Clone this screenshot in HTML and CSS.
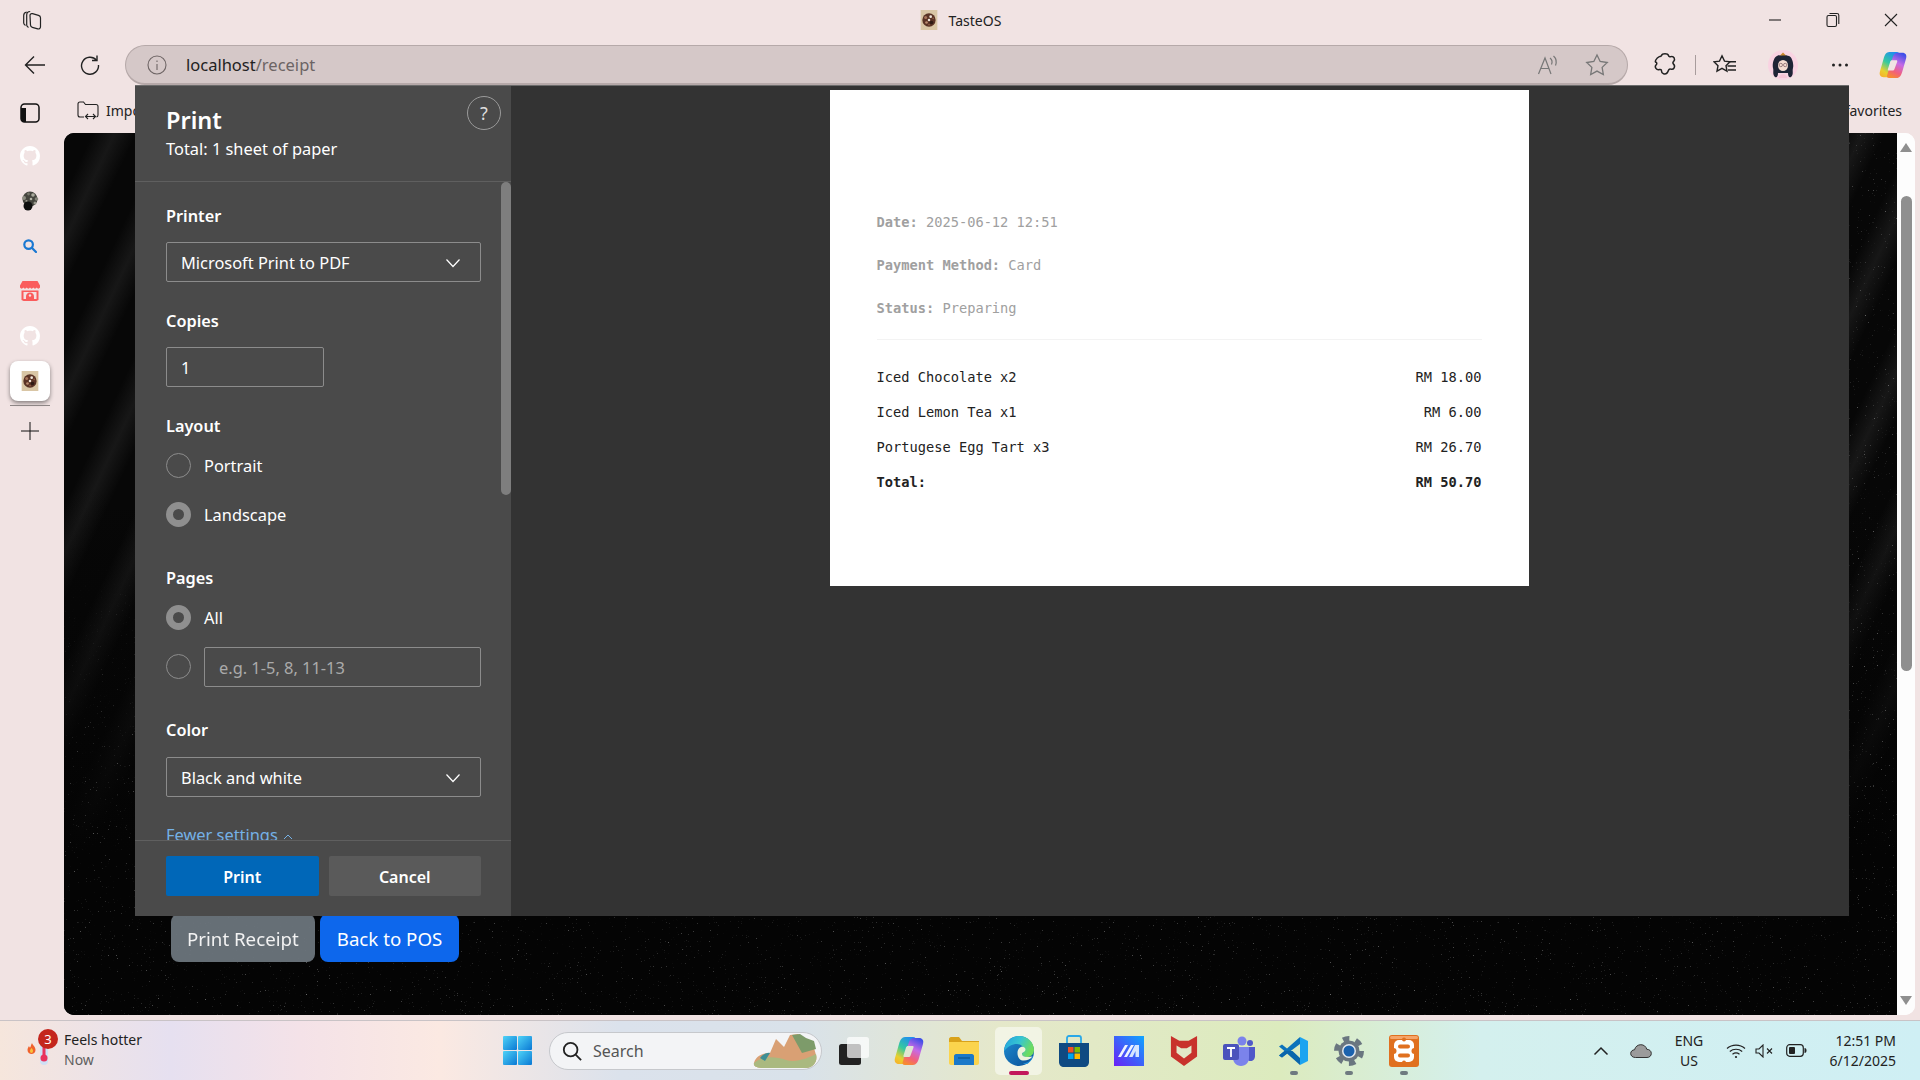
FILE: index.html
```html
<!DOCTYPE html>
<html lang="en">
<head>
    <meta charset="UTF-8">
    <title>TasteOS</title>
    <link rel="stylesheet" href="styles.css">
</head>
<body>

<svg class="defs" width="0" height="0">
    <defs>
        <filter id="star-noise" x="0" y="0" width="100%" height="100%">
            <feTurbulence type="fractalNoise" baseFrequency="0.75" numOctaves="2" seed="7"/>
            <feColorMatrix values="0 0 0 0 1  0 0 0 0 1  0 0 0 0 1  5 0 0 0 -3.600"/>
        </filter>
        <linearGradient id="copilot-a" x1=".7" y1="0" x2=".2" y2="1">
            <stop offset="0" stop-color="#1f8df0"/>
            <stop offset=".45" stop-color="#35c9a0"/>
            <stop offset=".8" stop-color="#e9d02e"/>
            <stop offset="1" stop-color="#f5b52a"/>
        </linearGradient>
        <linearGradient id="copilot-b" x1=".7" y1="0" x2=".3" y2="1">
            <stop offset="0" stop-color="#3f4fe8"/>
            <stop offset=".4" stop-color="#c56ae6"/>
            <stop offset=".75" stop-color="#f2607a"/>
            <stop offset="1" stop-color="#f78a32"/>
        </linearGradient>
        <linearGradient id="edge-a" x1="0" y1="0" x2="1" y2="1">
            <stop offset="0" stop-color="#1e8fd4"/>
            <stop offset="1" stop-color="#0b4d94"/>
        </linearGradient>
        <linearGradient id="edge-b" x1="0" y1="0" x2="1" y2=".4">
            <stop offset="0" stop-color="#1f9fe0"/>
            <stop offset=".55" stop-color="#37c6d0"/>
            <stop offset="1" stop-color="#6fdc5c"/>
        </linearGradient>
        <linearGradient id="win-a" x1="0" y1="0" x2="1" y2="1">
            <stop offset="0" stop-color="#4fd3f7"/>
            <stop offset="1" stop-color="#0a78d4"/>
        </linearGradient>
        <linearGradient id="app-a" x1="1" y1="0" x2="0" y2="1">
            <stop offset="0" stop-color="#0ea5ff"/>
            <stop offset="1" stop-color="#6a1ff5"/>
        </linearGradient>
        <symbol id="github" viewBox="0 0 16 16">
            <path d="M8 0C3.58 0 0 3.58 0 8c0 3.54 2.29 6.53 5.47 7.59.4.07.55-.17.55-.38 0-.19-.01-.82-.01-1.49-2.01.37-2.53-.49-2.69-.94-.09-.23-.48-.94-.82-1.13-.28-.15-.68-.52-.01-.53.63-.01 1.08.58 1.23.82.72 1.21 1.87.87 2.33.66.07-.52.28-.87.51-1.07-1.78-.2-3.64-.89-3.64-3.95 0-.87.31-1.59.82-2.15-.08-.2-.36-1.02.08-2.12 0 0 .67-.21 2.2.82.64-.18 1.32-.27 2-.27.68 0 1.36.09 2 .27 1.53-1.04 2.2-.82 2.2-.82.44 1.1.16 1.92.08 2.12.51.56.82 1.27.82 2.15 0 3.07-1.87 3.75-3.65 3.95.29.25.54.73.54 1.48 0 1.07-.01 1.93-.01 2.2 0 .21.15.46.55.38A8.013 8.013 0 0016 8c0-4.42-3.58-8-8-8z" fill="#fff"/>
        </symbol>
        <symbol id="taste" viewBox="0 0 20 24">
            <rect width="20" height="24" fill="#d9c6a5"/>
            <circle cx="10" cy="12" r="8" fill="#5a3325"/>
            <circle cx="6" cy="9" r="1.800" fill="#a8745a"/>
            <circle cx="13" cy="15" r="2.200" fill="#2f1a14"/>
            <circle cx="12" cy="8" r="1.600" fill="#efe6da"/>
            <circle cx="7" cy="15" r="1.600" fill="#b98a6e"/>
            <circle cx="10" cy="12" r="1.500" fill="#efe6da"/>
            <circle cx="15" cy="10" r="1.100" fill="#8d5c44"/>
            <circle cx="10" cy="17.500" r="1.100" fill="#8d5c44"/>
        </symbol>
        <symbol id="chevron" viewBox="0 0 16 16">
            <path d="M1.500 4.500 8 11.500l6.500-7" fill="none" stroke="#fff" stroke-width="1.200"/>
        </symbol>
        <symbol id="copilot" viewBox="0 0 30 30">
            <path d="M11 1h8c2.500 0 3 1.500 2 4L15 24c-.8 2.500-2.500 4-5 4H5c-3.500 0-5-2.500-4-6L5 8c1-4 3-7 6-7z" fill="url(#copilot-a)"/>
            <path d="M19 29h-8c-2.500 0-3-1.500-2-4l6-19c.8-2.500 2.500-4 5-4h5c3.500 0 5 2.500 4 6l-4 14c-1 4-3 7-6 7z" fill="url(#copilot-b)"/>
            <path d="M14 10h4.500c1 0 1.300.7 1 1.500l-3 8c-.3 1-1 1.500-2 1.500H10.500c-1 0-1.300-.7-1-1.500l2.500-8c.3-.9 1-1.500 2-1.500z" fill="currentColor"/>
        </symbol>
    </defs>
</svg>

<header class="titlebar">
    <div class="title-left">
        <svg width="22" height="22" viewBox="0 0 22 22" fill="none" stroke="#222" stroke-width="1.200">
            <path d="M4.500 16.500c-1-.6-1.800-1.200-1.800-2.400V6.500c0-1.800 1.300-3.200 3-3.400"/>
            <path d="M7.500 18.500c-1-.6-1.800-1.200-1.800-2.400V6c0-2 1.500-3.500 3.500-3.500"/>
            <path d="M9 6.500c0-1.500 1-2.200 2.500-1.800l6 1.600c1.200.3 2 1.300 2 2.500v9c0 1.500-1.300 2.500-2.700 2.100l-5.500-1.500c-1.100-.3-1.800-1.200-1.800-2.300z"/>
        </svg>
    </div>
    <div class="title-center">
        <svg class="favicon" width="20" height="20"><use href="#taste"/></svg>
        <span>TasteOS</span>
    </div>
    <div class="window-controls">
        <div class="win-btn">
            <svg width="14" height="14" viewBox="0 0 14 14"><path d="M1 7h12" stroke="#222" stroke-width="1.100"/></svg>
        </div>
        <div class="win-btn">
            <svg width="14" height="16" viewBox="0 0 14 16" fill="none" stroke="#222" stroke-width="1.100"><rect x="1" y="3.500" width="9.500" height="11" rx="1.500"/><path d="M3.500 1.500h7.500c1 0 1.800.8 1.800 1.800v8.700"/></svg>
        </div>
        <div class="win-btn">
            <svg width="14" height="14" viewBox="0 0 14 14"><path d="M1 1l12 12M13 1 1 13" stroke="#222" stroke-width="1.100"/></svg>
        </div>
    </div>
</header>

<nav class="toolbar">
    <div class="tool back">
        <svg width="22" height="20" viewBox="0 0 22 20" fill="none" stroke="#222" stroke-width="1.400"><path d="M21 10H2M10 1.500 1.500 10l8.500 8.500"/></svg>
    </div>
    <div class="tool reload">
        <svg width="22" height="22" viewBox="0 0 22 22" fill="none" stroke="#222" stroke-width="1.400"><path d="M17.500 6.200A8.500 8.500 0 1 0 19.500 11"/><path d="M18 1.500v5h-5"/></svg>
    </div>
    <div class="omnibox">
        <svg class="info-icon" width="20" height="20" viewBox="0 0 20 20" fill="none" stroke="#6e6565" stroke-width="1.100"><circle cx="10" cy="10" r="9"/><path d="M10 9v6M10 5.500v1.500"/></svg>
        <div class="url">localhost<span class="url-path">/receipt</span></div>
        <svg class="read-icon" width="22" height="20" viewBox="0 0 22 20" fill="none" stroke="#777" stroke-width="1.200"><path d="M1.500 19 8 3l6 16M4 13.500h8"/><path d="M13 3c2 1.500 2.500 4 1.500 6.500M16.500 1c2.800 2.500 3.300 6 2 9.500"/></svg>
        <svg class="star-icon" width="24" height="24" viewBox="0 0 22 22" fill="none" stroke="#777" stroke-width="1.200"><path d="M11 1.800l2.900 6 6.500.9-4.700 4.500 1.100 6.500-5.800-3.100-5.800 3.100 1.100-6.500L1.600 8.700l6.500-.9z"/></svg>
    </div>
    <div class="tool ext">
        <svg width="24" height="26" viewBox="0 0 24 26" fill="none" stroke="#222" stroke-width="1.500"><path d="M8.500 3.500C9.300 1 14.700 1 15.500 3.500c.3 1 1.300 1.500 2.300 1.100 3-.9 5 2.800 2.700 5-.8.7-.8 1.800 0 2.500 2.300 2.200.3 6-2.700 5-1-.3-2 .2-2.300 1.200-.8 2.700-3 4-5 3.500-1.500-.4-2-1.800-2-2.800 0-1.200-1-1.800-2-1.500-3 .9-5.500-2.500-3.300-4.700.8-.7.800-1.800 0-2.500C1 10.500 3.300 5.800 6.300 4.600c1-.3 1.900-.2 2.200-1.100z"/></svg>
    </div>
    <div class="tool-sep"></div>
    <div class="tool favs">
        <svg width="24" height="22" viewBox="0 0 24 22" fill="none" stroke="#222" stroke-width="1.400"><path d="M9 1.800l2.500 5.300 5.500.7-4 3.900 1 5.500-5-2.800-5 2.800 1-5.500-4-3.900 5.500-.7z"/><path d="M15.500 7.800H23M14.500 12H23M15 16H23"/></svg>
    </div>
    <div class="tool avatar">
        <svg width="30" height="30" viewBox="0 0 30 30">
            <circle cx="15" cy="15" r="15" fill="#f9d3e2"/>
            <path d="M7 27c-3-3-1-6-2-9-1-4 1-11 4-12 3-1.500 9-1.500 12 0 3 1 5 8 4 12-1 3 1 6-2 9-2 1-3-1-3-4H10c0 3-1 5-3 4z" fill="#1f2436"/>
            <ellipse cx="15" cy="15.500" rx="5" ry="5.500" fill="#f6dcd2"/>
            <circle cx="12.800" cy="15" r="1.700" fill="none" stroke="#7a5a62" stroke-width=".7"/>
            <circle cx="17.200" cy="15" r="1.700" fill="none" stroke="#7a5a62" stroke-width=".7"/>
            <path d="M12 5.500l3-3 3 3z" fill="#c9862c"/>
            <path d="M11 28c0-5 8-5 8 0z" fill="#f7c3d6"/>
        </svg>
    </div>
    <div class="tool dots">
        <svg width="18" height="4" viewBox="0 0 18 4" fill="#222"><circle cx="2.500" cy="2" r="1.500"/><circle cx="9" cy="2" r="1.500"/><circle cx="15.500" cy="2" r="1.500"/></svg>
    </div>
    <div class="tool copilot">
        <svg width="28" height="28"><use href="#copilot"/></svg>
    </div>
</nav>

<div class="main">
    <aside class="sidebar">
        <div class="side-item first">
            <svg width="20" height="20" viewBox="0 0 20 20"><rect x="1" y="1" width="18" height="18" rx="3.500" fill="none" stroke="#111" stroke-width="1.500"/><path d="M1 5h5v14H4.500A3.500 3.500 0 0 1 1 15.500z" fill="#111"/></svg>
        </div>
        <div class="side-item"><svg width="20" height="20"><use href="#github"/></svg></div>
        <div class="side-item">
            <svg width="20" height="20" viewBox="0 0 20 20">
                <circle cx="10" cy="8" r="7.500" fill="#45453e"/>
                <circle cx="4" cy="7" r="2" fill="#8c8c80"/>
                <circle cx="13" cy="4" r="1.800" fill="#a9a99c"/>
                <circle cx="16.500" cy="8" r="1.800" fill="#85857a"/>
                <circle cx="8.500" cy="3" r="1.400" fill="#77776c"/>
                <circle cx="15" cy="12" r="1.500" fill="#9a9a8e"/>
                <circle cx="11" cy="8" r="1.300" fill="#b5b5a8"/>
                <circle cx="6.500" cy="10" r="1.100" fill="#a0a094"/>
                <circle cx="8" cy="15" r="4.500" fill="#0e0e0e"/>
            </svg>
        </div>
        <div class="side-item">
            <svg width="14" height="14" viewBox="0 0 14 14" fill="none" stroke="#1a78d2" stroke-width="2.200"><circle cx="5.600" cy="5.600" r="4.300"/><path d="M8.800 8.800 13 13" stroke-linecap="round"/></svg>
        </div>
        <div class="side-item">
            <svg width="20" height="20" viewBox="0 0 20 20">
                <path d="M2.500 0h15L20 4.500v2c-1 1.500-2.500 1.500-3.300 0-.8 1.500-2.600 1.500-3.400 0-.8 1.500-2.500 1.500-3.300 0-.8 1.500-2.500 1.500-3.300 0-.8 1.500-2.600 1.500-3.400 0C2.500 8 1 8 0 6.500v-2z" fill="#fa5c5c"/>
                <path d="M1.500 9.500h17V19l-2 1h-13l-2-1z" fill="#fa5c5c"/>
                <path d="M3.500 11h13v7h-13z" fill="#f4e2e2"/>
                <path d="M10 11.500c2.500 0 4 2 4 4v2.500H6v-2.500c0-2 1.500-4 4-4z" fill="#fa5c5c"/>
                <circle cx="10" cy="14.500" r="1.200" fill="#f4e2e2"/>
            </svg>
        </div>
        <div class="side-item"><svg width="20" height="20"><use href="#github"/></svg></div>
        <div class="side-item">
            <div class="side-tile"><svg width="20" height="20"><use href="#taste"/></svg></div>
        </div>
        <div class="side-sep"></div>
        <div class="side-item">
            <svg width="18" height="18" viewBox="0 0 18 18"><path d="M0 9h18M9 0v18" stroke="#111" stroke-width="1"/></svg>
        </div>
    </aside>

    <div class="content">
        <div class="favbar">
            <div class="fav-import">
                <svg width="22" height="19" viewBox="0 0 22 19" fill="none" stroke="#222" stroke-width="1.100"><path d="M7 16H3c-1.200 0-2-.8-2-2V3c0-1.200.8-2 2-2h3.500l2 2.500H19c1.200 0 2 .8 2 2v8.500c0 1-.6 1.800-1.500 2"/><path d="M9 15.500h9M11 13l-2.500 2.500L11 18M16 13l2.500 2.500L16 18"/></svg>
                <span>Import favorites</span>
            </div>
            <div class="fav-other">Other favorites</div>
        </div>
        <div class="page">
            <div class="page-bg">
                <svg class="stars" width="100%" height="100%"><rect width="100%" height="100%" filter="url(#star-noise)"/></svg>
                <div class="page-actions">
                    <button class="btn btn-secondary">Print Receipt</button>
                    <button class="btn btn-primary">Back to POS</button>
                </div>
            </div>
            <div class="page-scroll">
                <div class="arrow-up"></div>
                <div class="thumb-wrap"><div class="thumb"></div></div>
                <div class="arrow-down"></div>
            </div>
        </div>
    </div>
</div>

<footer class="taskbar">
    <div class="weather">
        <div class="weather-icon">
            <svg width="36" height="42" viewBox="0 0 36 42">
                <path d="M10 9c.5 2 3.500 3.500 3.500 7 0 2.500-2 4-4 4s-4-1.500-4-4c0-2 1-3 1.500-4 .3 1 .7 1.500 1.200 1.500C9 12 9 10.500 10 9z" fill="#f0622c"/>
                <path d="M9.500 14c1 1 1.500 1.800 1.500 3s-.7 2-1.500 2-1.500-.8-1.500-2 .7-2 1.500-3z" fill="#f9c23c"/>
                <rect x="18" y="4" width="8" height="27" rx="4" fill="#cfe0f5"/>
                <rect x="20.500" y="4" width="3" height="18" fill="#e8335e"/>
                <circle cx="22" cy="24" r="3.500" fill="#e8335e"/>
            </svg>
            <div class="weather-badge">3</div>
        </div>
        <div class="weather-text">
            <div>Feels hotter</div>
            <div class="muted">Now</div>
        </div>
    </div>

    <div class="start">
        <svg width="29" height="29" viewBox="0 0 29 29" fill="url(#win-a)"><rect width="14" height="14" rx="1"/><rect x="15" width="14" height="14" rx="1"/><rect y="15" width="14" height="14" rx="1"/><rect x="15" y="15" width="14" height="14" rx="1"/></svg>
    </div>

    <div class="search">
        <svg width="20" height="20" viewBox="0 0 22 22" fill="none" stroke="#222" stroke-width="2"><circle cx="9.500" cy="9.500" r="7.500"/><path d="M15 15l6 6"/></svg>
        <span>Search</span>
        <svg class="search-art" width="66" height="36" viewBox="0 0 66 36">
            <path d="M2 30C4 22 12 20 18 20l6-14 8 8 6-12 8-1 6 4 8 3 4 14c2 6-3 13-10 13H14C6 35 1 34 2 30z" fill="#d9a074"/>
            <path d="M40 2l8-1 6 4 8 3 2 8-14 4z" fill="#7d9b6a"/>
            <path d="M2 30c10-8 22-6 32-3s22-2 30-6c2 8-3 14-10 14H14C6 35 1 34 2 30z" fill="#aab97f"/>
            <path d="M8 25c3-4 8-6 10-5l-5 8z" fill="#3d8f95"/>
        </svg>
    </div>

    <div class="apps">
        <div class="app">
            <svg width="30" height="30" viewBox="0 0 30 30"><rect y="8" width="22" height="21" rx="2.500" fill="#222"/><rect x="8" y="1" width="22" height="21" rx="2.500" fill="#fff" opacity=".72"/></svg>
        </div>
        <div class="app app-copilot">
            <svg width="30" height="30"><use href="#copilot"/></svg>
        </div>
        <div class="app">
            <svg width="30" height="28" viewBox="0 0 30 28"><path d="M0 2c0-1 1-2 2-2h8l3 4h17v4H0z" fill="#d9a21a"/><path d="M0 5h30v21c0 1-1 2-2 2H2c-1 0-2-1-2-2z" fill="#fbd44d"/><path d="M5 19c0-1 1-2 2-2h16c1 0 2 1 2 2v9H5z" fill="#1b79c9"/><path d="M9 21h12" stroke="#0d558f" stroke-width="1.200"/></svg>
        </div>
        <div class="app app-active">
            <svg width="30" height="30" viewBox="0 0 30 30">
                <circle cx="15" cy="15" r="15" fill="url(#edge-a)"/>
                <path d="M15 0c9 0 15 6.500 15 14 0 4.500-3.500 7-7 7-2.500 0-5-1-5-2.500 0-1.500 2-1.500 2-4.500 0-3-3-6-7-6-5 0-9 2.500-13 7C1 6 8 0 15 0z" fill="url(#edge-b)"/>
                <path d="M13.500 17c0-4 3-7 6-6 2 .6 2.500 2.500 1.500 4-1 1.500-3 1.200-3 3 0 2.500 4 3.500 10.500 2.500-2 3-6.500 4.500-10 4-3-.5-5-3.500-5-7.500z" fill="#eef2dc"/>
                <path d="M30 17c-.5 5-3 8-6 10.500-2 1-4 .5-5-.5 4 .5 8-1.500 11-10z" fill="#1f8fd8"/>
            </svg>
            <div class="app-line"></div>
        </div>
        <div class="app">
            <svg width="30" height="32" viewBox="0 0 30 32"><path d="M8 9V3c0-1 .8-2 2-2h10c1.200 0 2 1 2 2v6" fill="none" stroke="#2aa8e8" stroke-width="1.800"/><path d="M0 8h30v19c0 3-2 5-5 5H5c-3 0-5-2-5-5z" fill="#0f4a82"/><rect x="9" y="12" width="5.500" height="5.500" fill="#f25022"/><rect x="15.500" y="12" width="5.500" height="5.500" fill="#7fba00"/><rect x="9" y="18.500" width="5.500" height="5.500" fill="#00a4ef"/><rect x="15.500" y="18.500" width="5.500" height="5.500" fill="#ffb900"/></svg>
        </div>
        <div class="app">
            <svg width="30" height="30" viewBox="0 0 30 30"><rect width="30" height="30" fill="url(#app-a)"/><path d="M4 21 11 9h3L7 21zM10 21 17 9h3l-7 12z" fill="#eef2ff"/><path d="M15 21 21 9h4v12h-3.500v-6l-3 6z" fill="#d5e6ff"/></svg>
        </div>
        <div class="app">
            <svg width="28" height="32" viewBox="0 0 30 32"><path d="M1 0 10 5h10l9-5v22L15 32 1 22z" fill="#c8322c"/><path d="M7 10l5 3h6l5-3v8l-8 6-8-6z" fill="#e2e8c8"/></svg>
        </div>
        <div class="app">
            <svg width="32" height="30" viewBox="0 0 32 30"><circle cx="19" cy="5" r="4.500" fill="#7b83eb"/><circle cx="27" cy="7" r="3" fill="#5059c9"/><path d="M23 11h9v9c0 3-2 5-4.500 5S23 23 23 20z" fill="#5059c9"/><path d="M10 11h16v11c0 4-3 8-8 8s-8-4-8-8z" fill="#7b83eb"/><rect y="8" width="16" height="16" rx="2" fill="#4b53bc"/><path d="M4 12h8M8 12v9" stroke="#fff" stroke-width="1.800"/></svg>
        </div>
        <div class="app">
            <svg width="30" height="30" viewBox="0 0 30 30"><path d="M21 1 8 12.500 3 8.500 0 10.500 5.500 15 0 19.500 3 21.500 21 8z" fill="#0c72bb"/><path d="M21 29 8 17.500 3 21.500 0 19.500 5.500 15 13.500 15 21 22z" fill="#0a66ac"/><path d="M21 1l8 4v20l-8 4z" fill="#1ca4f0"/></svg>
            <div class="app-dot"></div>
        </div>
        <div class="app">
            <svg width="30" height="30" viewBox="0 0 30 30"><circle cx="15" cy="15" r="10.500" fill="#6a7680"/><circle cx="15" cy="15" r="12.500" fill="none" stroke="#6a7680" stroke-width="5" stroke-dasharray="6.500 6.600"/><circle cx="15" cy="15" r="7" fill="#e3e8ee"/><circle cx="15" cy="15" r="5.500" fill="#1b62ae"/></svg>
            <div class="app-dot"></div>
        </div>
        <div class="app">
            <svg width="30" height="32" viewBox="0 0 30 32"><rect width="30" height="32" rx="3" fill="#e0701f"/><rect x="1" y="1" width="28" height="3" rx="1.500" fill="#f5a56a"/><rect x="5" y="5" width="20" height="22" rx="5" fill="#fff"/><rect x="9" y="9.500" width="12" height="4" rx="2" fill="#e0701f"/><rect x="9" y="18.500" width="12" height="4" rx="2" fill="#e0701f"/><circle cx="4.500" cy="16" r="3" fill="#e0701f"/><circle cx="25.500" cy="16" r="3" fill="#e0701f"/><circle cx="15" cy="4.500" r="2" fill="#e0701f"/><circle cx="15" cy="27.500" r="2" fill="#e0701f"/></svg>
            <div class="app-dot"></div>
        </div>
    </div>

    <div class="tray">
        <div class="tray-item chev">
            <svg width="16" height="10" viewBox="0 0 16 10" fill="none" stroke="#222" stroke-width="1.500"><path d="M1.500 8.500 8 2l6.500 6.500"/></svg>
        </div>
        <div class="tray-item cloud">
            <svg width="22" height="14" viewBox="0 0 22 14"><path d="M5.500 13.500C2.500 13.500 .7 11.700.7 9.500S2.500 5.800 4.500 5.800C5.300 2.500 8 .7 10.800.7c3 0 5.200 1.800 6 4.600 2.500 0 4.500 1.700 4.500 4.100s-1.800 4.100-4.300 4.100z" fill="#9b9b9b" stroke="#333" stroke-width="1"/></svg>
        </div>
        <div class="tray-item lang"><div>ENG</div><div>US</div></div>
        <div class="tray-item wifi">
            <svg width="20" height="16" viewBox="0 0 20 16" fill="none" stroke="#222" stroke-width="1.200"><path d="M1 5.500C6 1 14 1 19 5.500M3.800 8.500C7.300 5.500 12.700 5.500 16.200 8.500M6.500 11.300c2-1.500 5-1.500 7 0"/><circle cx="10" cy="14" r="1.100" fill="#222" stroke="none"/></svg>
        </div>
        <div class="tray-item speaker">
            <svg width="20" height="14" viewBox="0 0 20 14" fill="none" stroke="#222" stroke-width="1.100"><path d="M1 5v4h3l4 4V1L4 5z"/><path d="M12 4.500l5 5M17 4.500l-5 5"/></svg>
        </div>
        <div class="tray-item battery">
            <svg width="21" height="13" viewBox="0 0 21 13"><rect x=".7" y=".7" width="16.600" height="11.600" rx="3" fill="none" stroke="#222" stroke-width="1.200"/><rect x="3" y="3" width="6" height="7" rx="1" fill="#222"/><path d="M18.500 4c1.500 0 2 1 2 2.500S20 9 18.500 9z" fill="#222"/></svg>
        </div>
        <div class="clock"><div>12:51 PM</div><div>6/12/2025</div></div>
    </div>
</footer>

<!-- print dialog sits on top of the whole window -->
<div class="print-dialog">
    <div class="print-panel">
        <div class="print-head">
            <div>
                <h1 class="print-title">Print</h1>
                <div class="print-total">Total: 1 sheet of paper</div>
            </div>
            <div class="help-btn">?</div>
        </div>

        <div class="print-body">
            <div class="print-scroll"></div>

            <section class="field">
                <div class="field-label">Printer</div>
                <div class="box select-box">Microsoft Print to PDF <svg width="16" height="16"><use href="#chevron"/></svg></div>
            </section>

            <section class="field">
                <div class="field-label">Copies</div>
                <div class="box copies-box">1</div>
            </section>

            <section class="field field-radios">
                <div class="field-label">Layout</div>
                <div class="radio-row"><span class="radio"></span>Portrait</div>
                <div class="radio-row"><span class="radio checked"></span>Landscape</div>
            </section>

            <section class="field field-radios">
                <div class="field-label">Pages</div>
                <div class="radio-row"><span class="radio checked"></span>All</div>
                <div class="radio-row"><span class="radio"></span><div class="box pages-box">e.g. 1-5, 8, 11-13</div></div>
            </section>

            <section class="field field-color">
                <div class="field-label">Color</div>
                <div class="box select-box">Black and white <svg width="16" height="16"><use href="#chevron"/></svg></div>
            </section>

            <div class="fewer">Fewer settings
                <svg width="12" height="8" viewBox="0 0 12 8" fill="none" stroke="#75b1e6" stroke-width="1"><path d="M2 6l4-4 4 4"/></svg>
            </div>
        </div>

        <div class="print-foot">
            <button class="dlg-btn dlg-print">Print</button>
            <button class="dlg-btn dlg-cancel">Cancel</button>
        </div>
    </div>

    <div class="preview">
        <div class="paper">
            <p class="meta"><b>Date:</b> 2025-06-12 12:51</p>
            <p class="meta"><b>Payment Method:</b> Card</p>
            <p class="meta"><b>Status:</b> Preparing</p>
            <div class="paper-rule"></div>
            <div class="line"><span>Iced Chocolate x2</span><span>RM 18.00</span></div>
            <div class="line"><span>Iced Lemon Tea x1</span><span>RM 6.00</span></div>
            <div class="line"><span>Portugese Egg Tart x3</span><span>RM 26.70</span></div>
            <div class="line line-total"><span>Total:</span><span>RM 50.70</span></div>
        </div>
    </div>
</div>

</body>
</html>
```

FILE: styles.css
```css
* {
    box-sizing: border-box;
}
html, body {
    margin: 0;
    padding: 0;
}
body {
    position: relative;
    width: 1920px;
    height: 1080px;
    overflow: hidden;
    display: flex;
    flex-direction: column;
    background: #f1e3e3;
    font-family: "Noto Sans", "Open Sans", sans-serif;
    color: #222;
}
.defs {
    position: absolute;
}

/* title bar */
.titlebar {
    height: 45px;
    flex: none;
    display: grid;
    grid-template-columns: 1fr auto 1fr;
    align-items: center;
    padding-bottom: 5px;
}
.title-left {
    padding-left: 21px;
    display: flex;
}
.title-center {
    display: flex;
    align-items: center;
    gap: 10px;
    font-size: 14px;
    color: #222;
}
.window-controls {
    display: flex;
    justify-content: flex-end;
}
.win-btn {
    width: 58px;
    height: 40px;
    display: flex;
    align-items: center;
    justify-content: center;
}

/* toolbar */
.toolbar {
    height: 40px;
    flex: none;
    display: flex;
    align-items: center;
    padding-left: 10px;
}
.tool {
    height: 40px;
    display: flex;
    align-items: center;
    justify-content: center;
    flex: none;
}
.back { width: 50px; }
.reload { width: 60px; }
.omnibox {
    width: 1503px;
    height: 40px;
    flex: none;
    margin-left: 5px;
    display: flex;
    align-items: center;
    background: #d5c8c8;
    border: 1px solid #b6a9a9;
    border-bottom-width: 2px;
    border-radius: 20px;
    padding-left: 21px;
}
.url {
    margin-left: 19px;
    font-size: 16.500px;
    color: #222;
    flex: 1;
}
.url-path {
    color: #6c6464;
}
.read-icon {
    margin-right: 26px;
}
.star-icon {
    margin-right: 18px;
}
.ext {
    width: 47px;
    margin-left: 13px;
}
.tool-sep {
    width: 14px;
    height: 20px;
    flex: none;
    background: linear-gradient(#a89c9c, #a89c9c) center / 1px 100% no-repeat;
}
.favs { width: 46px; }
.avatar { width: 70px; }
.dots { width: 44px; }
.copilot {
    width: 58px;
    padding-left: 4px;
    color: #f1e3e3;
}

/* sidebar + content */
.main {
    flex: 1;
    display: flex;
    min-height: 0;
    margin-bottom: 5px;
    padding-right: 5px;
}
.sidebar {
    width: 64px;
    flex: none;
    padding-top: 8px;
    display: flex;
    flex-direction: column;
}
.side-item {
    height: 45px;
    flex: none;
    display: flex;
    align-items: center;
    justify-content: center;
    padding-right: 4px;
}
.side-item.first {
    height: 40px;
}
.side-tile {
    width: 40px;
    height: 40px;
    background: #fff;
    border-radius: 8px;
    box-shadow: 0 2px 4px rgba(0, 0, 0, 0.45);
    display: flex;
    align-items: center;
    justify-content: center;
}
.side-sep {
    width: 40px;
    height: 1px;
    margin: 2px 0 2px 10px;
    background: #8d8585;
    flex: none;
}
.content {
    flex: 1;
    min-width: 0;
    display: flex;
    flex-direction: column;
}
.favbar {
    height: 48px;
    flex: none;
    display: flex;
    justify-content: space-between;
    align-items: center;
    font-size: 14px;
    padding: 2px 13px 0;
}
.fav-import {
    display: flex;
    align-items: center;
    gap: 7px;
}
.page {
    flex: 1;
    display: flex;
    min-height: 0;
    border-radius: 10px;
    overflow: hidden;
    background: #fff;
}
.page-bg {
    position: relative;
    flex: 1;
    background-color: #040404;
    background-image:
        linear-gradient(to bottom, transparent 350px, #040404 720px),
        repeating-linear-gradient(115deg, #070707 0 26px, #171717 46px, #070707 66px);
    padding: 781px 0 0 107px;
}
.stars {
    position: absolute;
    left: 0;
    top: 0;
    opacity: 0.4;
    -webkit-mask-image: linear-gradient(to bottom right, transparent 25%, #000 40%);
    mask-image: linear-gradient(to bottom right, transparent 25%, #000 40%);
}
.page-actions {
    position: relative;
    display: flex;
    gap: 5px;
}
.btn {
    height: 48px;
    border: none;
    border-radius: 8px;
    padding: 0 16px;
    font-family: inherit;
    font-size: 18.700px;
    color: #fff;
}
.btn-secondary {
    background: #6c757d;
    opacity: 0.95;
}
.btn-primary {
    padding: 0 17px;
    background: #0d67ec;
}
.page-scroll {
    width: 18px;
    flex: none;
    background: #fdfdfd;
    display: flex;
    flex-direction: column;
    align-items: center;
    padding: 10px 0;
}
.arrow-up {
    border: 6px solid transparent;
    border-top: 0;
    border-bottom: 9px solid #8f8f8f;
}
.arrow-down {
    border: 6px solid transparent;
    border-bottom: 0;
    border-top: 9px solid #8f8f8f;
}
.thumb-wrap {
    flex: 1;
    width: 100%;
    display: flex;
    justify-content: center;
    padding-top: 44px;
}
.thumb {
    width: 11px;
    height: 475px;
    border-radius: 6px;
    background: #8f8f8f;
}

/* taskbar */
.taskbar {
    height: 60px;
    flex: none;
    display: flex;
    align-items: center;
    border-top: 1px solid #c9c3c6;
    background: linear-gradient(90deg, #f6e6dc 0, #e6e0f0 170px, #f4e2e8 300px, #fbe9e2 440px, #dbe2ec 620px, #d9e2ea 800px, #e5e8ca 1000px, #dcebbe 1280px, #d4f0ee 1480px, #cfeff4 1920px);
}
.weather {
    width: 503px;
    flex: none;
    display: flex;
    align-items: center;
    padding-left: 22px;
    font-size: 14px;
    line-height: 20px;
    margin-top: -2px;
}
.weather-icon {
    position: relative;
    width: 42px;
    height: 42px;
    margin-top: 10px;
}
.weather-badge {
    position: absolute;
    left: 16px;
    top: -5px;
    width: 20px;
    height: 20px;
    border-radius: 50%;
    background: #c4261d;
    color: #fff;
    font-size: 13px;
    line-height: 20px;
    text-align: center;
}
.muted {
    color: #5f5f5f;
}
.start {
    width: 29px;
    height: 29px;
    flex: none;
    margin-right: 17px;
}
.search {
    width: 273px;
    height: 38px;
    flex: none;
    margin-right: 4px;
    background: #f3f4f6;
    border: 1px solid #c6c8cc;
    border-radius: 19px;
    display: flex;
    align-items: center;
    padding-left: 12px;
    gap: 11px;
    font-size: 16px;
    color: #555;
}
.search-art {
    margin-left: auto;
    margin-right: 3px;
}
.apps {
    display: flex;
    flex: none;
}
.app {
    position: relative;
    width: 55px;
    height: 48px;
    display: flex;
    align-items: center;
    justify-content: center;
}
.app-copilot {
    color: #e0e6d2;
}
.app-active {
    background: rgba(255, 255, 255, 0.5);
    border-radius: 5px;
    margin: 0 4px;
    width: 47px;
}
.app-line {
    position: absolute;
    left: 14px;
    bottom: 0;
    width: 20px;
    height: 4px;
    border-radius: 2px;
    background: #c2185b;
}
.app-dot {
    position: absolute;
    left: 24px;
    bottom: 0;
    width: 8px;
    height: 4px;
    border-radius: 2px;
    background: #6f7a80;
}
.tray {
    margin-left: auto;
    padding-right: 24px;
    display: flex;
    align-items: center;
    font-size: 14px;
    line-height: 20px;
    color: #222;
}
.tray-item {
    display: flex;
    align-items: center;
    justify-content: center;
}
.chev { width: 40px; }
.cloud { width: 40px; }
.lang {
    width: 56px;
    flex-direction: column;
}
.wifi { width: 38px; }
.speaker { width: 20px; }
.battery { width: 42px; }
.clock {
    width: 79px;
    text-align: right;
    white-space: nowrap;
}

/* print dialog */
.print-dialog {
    position: absolute;
    left: 135px;
    top: 85px;
    width: 1714px;
    height: 831px;
    display: flex;
    background: #333;
    color: #fff;
    border-top: 1px solid #6c6c6c;
}
.print-panel {
    width: 376px;
    flex: none;
    display: flex;
    flex-direction: column;
    background: #4a4a4a;
}
.print-head {
    height: 96px;
    flex: none;
    display: flex;
    justify-content: space-between;
    border-bottom: 1px solid #5f5f5f;
    padding: 18px 10px 0 31px;
}
.print-title {
    margin: 0;
    font-size: 23.500px;
    line-height: 32px;
    font-weight: 600;
}
.print-total {
    margin-top: 2px;
    font-size: 16.400px;
    line-height: 22px;
}
.help-btn {
    width: 34px;
    height: 34px;
    margin-top: -8px;
    border: 1px solid #9a9a9a;
    border-radius: 50%;
    text-align: center;
    line-height: 32px;
    font-size: 18px;
    color: #ddd;
}
.print-body {
    position: relative;
    flex: 1;
    min-height: 0;
    overflow: hidden;
    padding: 22px 30px 0 31px;
}
.print-scroll {
    position: absolute;
    right: 0;
    top: 0;
    width: 10px;
    height: 313px;
    border-radius: 5px;
    background: #7e7e7e;
}
.field {
    margin-bottom: 27px;
}
.field-label {
    font-size: 16.300px;
    line-height: 24px;
    font-weight: 600;
    margin-bottom: 14px;
}
.field-radios {
    margin-bottom: 32px;
}
.field-radios .field-label {
    margin-bottom: 7px;
}
.field-color .field-label {
    margin-bottom: 15px;
}
.box {
    height: 40px;
    border: 1px solid #8c8c8c;
    border-radius: 2px;
    display: flex;
    align-items: center;
    padding: 1px 14px 0;
    font-size: 16.400px;
}
.select-box {
    justify-content: space-between;
    padding-right: 19px;
}
.copies-box {
    width: 158px;
}
.pages-box {
    flex: 1;
    margin-top: 2px;
    color: #aaa;
}
.radio-row {
    height: 40px;
    display: flex;
    align-items: center;
    gap: 13px;
    font-size: 16.400px;
    margin-bottom: 9px;
}
.radio-row:last-child {
    margin-bottom: 0;
}
.radio {
    width: 25px;
    height: 25px;
    flex: none;
    border: 1px solid #8c8c8c;
    border-radius: 50%;
}
.radio.checked {
    border: 7px solid #8f8f8f;
}
.fewer {
    margin-top: -1px;
    font-size: 16.400px;
    line-height: 24px;
    color: #75b1e6;
}
.print-foot {
    height: 76px;
    flex: none;
    display: flex;
    gap: 10px;
    border-top: 1px solid #5f5f5f;
    padding: 15px 30px 0 31px;
}
.dlg-btn {
    flex: 1;
    height: 40px;
    border: none;
    border-radius: 2px;
    color: #fff;
    font-family: inherit;
    font-size: 16px;
    font-weight: 600;
    padding-top: 2px;
}
.dlg-print {
    background: #0067b8;
}
.dlg-cancel {
    background: #5a5a5a;
}
.preview {
    flex: 1;
    display: flex;
    justify-content: center;
    padding: 4px 2px 0 0;
}
.paper {
    width: 699px;
    height: 496px;
    background: #fff;
    padding: 124px 47px 0 47px;
    color: #222;
    font-family: "DejaVu Sans Mono", monospace;
    font-size: 13.700px;
}
.meta {
    margin: 0 0 26px;
    line-height: 17px;
    color: #a0a0a0;
}
.paper-rule {
    height: 1px;
    background: #f3f3f3;
    margin: -4px 0 29px;
}
.line {
    display: flex;
    justify-content: space-between;
    height: 35px;
    line-height: 17px;
}
.line-total {
    font-weight: bold;
}
```
